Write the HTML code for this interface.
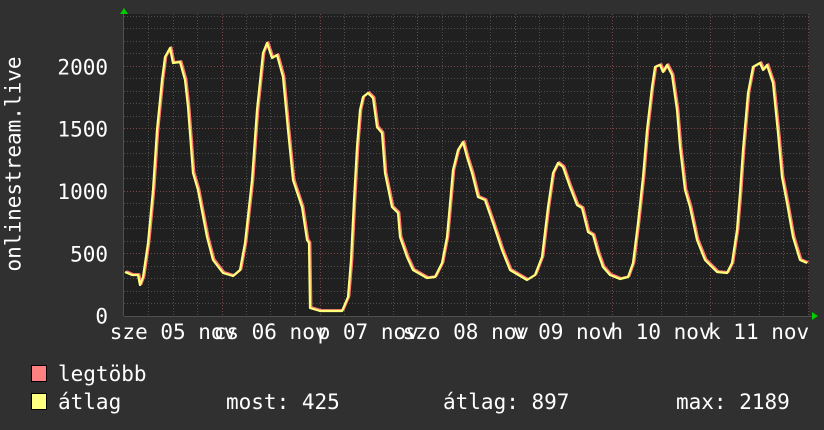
<!DOCTYPE html>
<html><head><meta charset="utf-8"><style>
html,body{margin:0;padding:0;background:#303030;}
svg{display:block}
text{font-family:"DejaVu Sans Mono","Liberation Mono",monospace;font-size:21px;fill:#fff}
</style></head><body>
<svg width="824" height="430" viewBox="0 0 824 430" xmlns="http://www.w3.org/2000/svg">
<defs>
<polyline id="c" points="125,272 132,275 138,275 140,285 143,277 148,243 153,190 157,130 162,80 165,57 170,48 173,63 180,62 185,80 188,107 193,173 198,190 207,237 213,260 223,273 233,276 240,270 245,243 252,180 257,110 263,53 267,43 272,58 277,55 283,77 288,130 293,180 302,207 307,240 309,243 310,308 320,311 342,311 348,297 351,260 354,200 357,147 360,110 363,97 368,93 373,98 377,127 382,133 385,173 392,207 398,213 400,237 407,257 413,270 427,278 435,277 442,263 447,237 453,170 458,150 463,142 467,157 472,173 478,197 485,200 493,223 502,250 510,270 527,280 535,275 542,257 548,207 553,173 558,163 563,167 570,187 577,205 582,208 588,232 593,235 598,253 603,267 610,275 620,279 628,277 633,263 638,223 643,177 647,130 652,87 655,67 660,65 663,72 667,65 672,75 677,110 680,147 685,190 690,207 697,240 705,260 717,272 727,273 732,263 737,230 740,193 743,150 748,93 753,67 760,63 763,70 767,65 773,83 778,133 782,177 787,203 793,237 800,260 807,263"/>
</defs>
<rect width="824" height="430" fill="#303030"/>
<rect x="124" y="14" width="685" height="302" fill="#202020"/>
<path stroke="#4e4e4e" stroke-width="1" stroke-dasharray="1,2" fill="none" d="M148.5 14V316M173.5 14V316M197.5 14V316M246.5 14V316M270.5 14V316M295.5 14V316M344.5 14V316M368.5 14V316M393.5 14V316M442.5 14V316M466.5 14V316M490.5 14V316M539.5 14V316M563.5 14V316M588.5 14V316M637.5 14V316M661.5 14V316M686.5 14V316M734.5 14V316M759.5 14V316M783.5 14V316
M124 303.5H809M124 291.5H809M124 278.5H809M124 266.5H809M124 241.5H809M124 228.5H809M124 216.5H809M124 203.5H809M124 178.5H809M124 166.5H809M124 153.5H809M124 141.5H809M124 116.5H809M124 103.5H809M124 91.5H809M124 78.5H809M124 53.5H809M124 41.5H809M124 28.5H809M124 16.5H809"/>
<path stroke="#7a4848" stroke-width="1" stroke-dasharray="1,2" fill="none" d="M222.5 14V316M320.5 14V316M417.5 14V316M515.5 14V316M612.5 14V316M710.5 14V316M808.5 14V316M124 253.5H809M124 191.5H809M124 128.5H809M124 66.5H809"/>
<line x1="124" y1="316.5" x2="812" y2="316.5" stroke="#505050"/>
<line x1="123.5" y1="12" x2="123.5" y2="316" stroke="#505050"/>
<polygon points="120,14 124,8 128,14" fill="#00cc00"/>
<polygon points="812,312 818,316 812,320" fill="#00cc00"/>
<g fill="none" stroke-width="2.2" stroke-linejoin="round">
<use href="#c" stroke="#ff7878" transform="translate(1.3,-0.8)"/>
<use href="#c" stroke="#ffff78"/>
</g>
<g text-anchor="end">
<text x="108" y="74.5">2000</text>
<text x="108" y="136.5">1500</text>
<text x="108" y="199">1000</text>
<text x="108" y="261.5">500</text>
<text x="108" y="323.5">0</text>
</g>
<g text-anchor="middle">
<text x="173" y="339">sze 05 nov</text>
<text x="270.6" y="339">cs 06 nov</text>
<text x="368.2" y="339">p 07 nov</text>
<text x="465.8" y="339">szo 08 nov</text>
<text x="563.4" y="339">v 09 nov</text>
<text x="661" y="339">h 10 nov</text>
<text x="758.6" y="339">k 11 nov</text>
</g>
<text x="0" y="0" text-anchor="middle" transform="translate(20.5,164) rotate(-90)">onlinestream.live</text>
<rect x="31.5" y="365.5" width="15" height="16" fill="#ff8080" stroke="#000"/>
<rect x="31.5" y="393.5" width="15" height="16" fill="#ffff80" stroke="#000"/>
<text x="58" y="381">legtöbb</text>
<text x="58" y="409">átlag</text>
<text x="226" y="409">most: 425</text>
<text x="443" y="409">átlag: 897</text>
<text x="676" y="409">max: 2189</text>
</svg>
</body></html>
